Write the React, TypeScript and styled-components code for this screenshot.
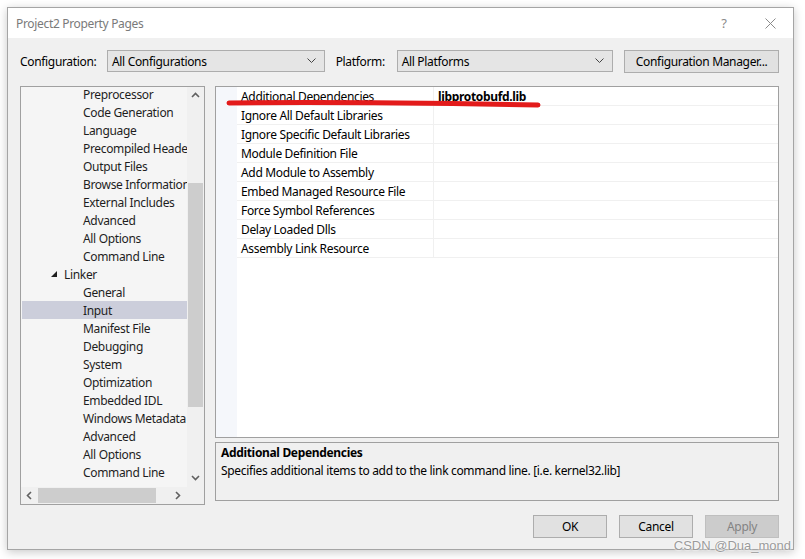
import React from 'react'
import styled, { createGlobalStyle } from 'styled-components'

const GlobalStyle = createGlobalStyle`
    html, body {
        margin: 0;
        padding: 0;
        background: #ffffff;
    }
    body {
        font-family: 'Noto Sans', 'Liberation Sans', sans-serif;
        font-size: 12px;
        letter-spacing: -0.33px;
        color: #000;
    }
`

const Page = styled.div`
    position: relative;
    width: 805px;
    height: 559px;
    padding: 7px 0 0 7px;
    box-sizing: border-box;
`

const Window = styled.div`
    width: 787px;
    height: 543px;
    box-sizing: border-box;
    border: 1px solid #a5a5a5;
    background: #f0f0f0;
    box-shadow: 0 2px 9px rgba(0, 0, 0, 0.22);
    display: flex;
    flex-direction: column;
`

const TitleBar = styled.div`
    height: 30px;
    background: #ffffff;
    display: flex;
    align-items: center;
    padding-left: 8px;
    color: #7a7a7a;
    font-size: 12px;
`

const TitleText = styled.span`
    flex: 1;
`

const TitleButton = styled.span`
    width: 46px;
    display: flex;
    justify-content: center;
    align-items: center;
    color: #8a8a8a;
    font-size: 13px;
`

const Body = styled.div`
    flex: 1;
    display: flex;
    flex-direction: column;
    padding: 11px 14px 0 12px;
`

const Toolbar = styled.div`
    display: flex;
    align-items: center;
    height: 24px;
`

const Label = styled.span<{ $width: number }>`
    width: ${(p) => p.$width}px;
    flex-shrink: 0;
`

const Combo = styled.div<{ $width: number; $gap: number }>`
    width: ${(p) => p.$width}px;
    height: 22px;
    box-sizing: border-box;
    border: 1px solid #adadad;
    background: #e5e5e5;
    display: flex;
    align-items: center;
    padding: 0 8px 0 4px;
    margin-right: ${(p) => p.$gap}px;
`

const ComboText = styled.span`
    flex: 1;
`

const Button = styled.div<{ $width: number; $disabled?: boolean }>`
    width: ${(p) => p.$width}px;
    height: 23px;
    box-sizing: border-box;
    border: 1px solid ${(p) => (p.$disabled ? '#bfbfbf' : '#adadad')};
    background: ${(p) => (p.$disabled ? '#cccccc' : '#e1e1e1')};
    color: ${(p) => (p.$disabled ? '#838383' : '#000')};
    display: flex;
    align-items: center;
    justify-content: center;
`

const Main = styled.div`
    display: flex;
    margin-top: 13px;
    gap: 10px;
`

const TreePanel = styled.div`
    width: 185px;
    height: 419px;
    box-sizing: border-box;
    border: 1px solid #a0a0a0;
    background: #f5f5f5;
    display: grid;
    grid-template-columns: 1fr 17px;
    grid-template-rows: 1fr 17px;
`

const TreeList = styled.div`
    overflow: hidden;
    padding-left: 1px;
`

const TreeScroller = styled.div`
    margin-top: -2px;
`

const TreeRow = styled.div<{ $level: number; $selected?: boolean }>`
    height: 18px;
    display: flex;
    align-items: center;
    padding-left: ${(p) => (p.$level === 1 ? 42 : 61)}px;
    white-space: nowrap;
    background: ${(p) => (p.$selected ? '#cccedb' : 'transparent')};
    color: #1e1e1e;
`

const Expander = styled.span`
    width: 13px;
    margin-left: -13px;
    display: inline-flex;
    align-items: center;
`

const VScroll = styled.div`
    background: #f0f0f0;
    display: flex;
    flex-direction: column;
    align-items: center;
`

const ScrollArrow = styled.div`
    height: 17px;
    width: 17px;
    display: flex;
    align-items: center;
    justify-content: center;
`

const VTrack = styled.div`
    flex: 1;
    width: 100%;
    display: flex;
    flex-direction: column;
    padding-top: 79px;
    box-sizing: border-box;
    align-items: center;
`

const VThumb = styled.div`
    width: 15px;
    height: 224px;
    background: #cdcdcd;
`

const HScroll = styled.div`
    background: #f0f0f0;
    display: flex;
    align-items: center;
`

const HThumb = styled.div`
    width: 118px;
    height: 15px;
    background: #cdcdcd;
    margin-right: auto;
`

const Corner = styled.div`
    background: #f0f0f0;
`

const RightCol = styled.div`
    display: flex;
    flex-direction: column;
    gap: 4px;
`

const Grid = styled.div`
    position: relative;
    width: 564px;
    height: 352px;
    box-sizing: border-box;
    border: 1px solid #a0a0a0;
    background: #ffffff;
    display: flex;
`

const GridGutter = styled.div`
    width: 21px;
    background: #f5f7fb;
`

const GridRows = styled.div`
    flex: 1;
    display: flex;
    flex-direction: column;
`

const PropRow = styled.div`
    height: 19px;
    display: grid;
    grid-template-columns: 197px 1fr;
    border-bottom: 1px solid #f0f0f0;
    box-sizing: border-box;
`

const PropName = styled.div`
    padding-left: 4px;
    display: flex;
    align-items: center;
    border-right: 1px solid #f0f0f0;
`

const PropValue = styled.div`
    padding-left: 4px;
    display: flex;
    align-items: center;
    font-weight: 700;
`

const Mark = styled.svg`
    position: absolute;
    left: 10px;
    top: 11px;
`

const Description = styled.div`
    width: 564px;
    height: 59px;
    box-sizing: border-box;
    border: 1px solid #a0a0a0;
    padding: 1px 5px;
    display: flex;
    flex-direction: column;
    gap: 1px;
`

const DescTitle = styled.div`
    font-weight: 700;
`

const Footer = styled.div`
    display: flex;
    justify-content: flex-end;
    gap: 12px;
    margin-top: 10px;
`

const Watermark = styled.div`
    position: absolute;
    right: 14px;
    bottom: 6px;
    font-family: 'Liberation Sans', Arial, sans-serif;
    font-size: 13px;
    letter-spacing: 0;
    color: #9a9a9a;
    text-shadow: 0 0 2px #fff, 0 0 2px #fff;
`

const Chevron = ({ dir }: { dir: 'up' | 'down' | 'left' | 'right' }) => {
    const pts = {
        down: '1,2 4.5,5.5 8,2',
        up: '1,6 4.5,2.5 8,6',
        left: '6,1 2.5,4.5 6,8',
        right: '2,1 5.5,4.5 2,8',
    }[dir]
    return (
        <svg width="9" height="9" viewBox="0 0 9 9">
            <polyline points={pts} fill="none" stroke="#606060" strokeWidth="1.6" />
        </svg>
    )
}

const ComboArrow = () => (
    <svg width="9" height="6" viewBox="0 0 9 6">
        <polyline points="0.5,0.5 4.5,4.5 8.5,0.5" fill="none" stroke="#444" strokeWidth="1" />
    </svg>
)

const treeItems: { label: string; level: number; selected?: boolean }[] = [
    { label: 'Preprocessor', level: 2 },
    { label: 'Code Generation', level: 2 },
    { label: 'Language', level: 2 },
    { label: 'Precompiled Headers', level: 2 },
    { label: 'Output Files', level: 2 },
    { label: 'Browse Information', level: 2 },
    { label: 'External Includes', level: 2 },
    { label: 'Advanced', level: 2 },
    { label: 'All Options', level: 2 },
    { label: 'Command Line', level: 2 },
    { label: 'Linker', level: 1 },
    { label: 'General', level: 2 },
    { label: 'Input', level: 2, selected: true },
    { label: 'Manifest File', level: 2 },
    { label: 'Debugging', level: 2 },
    { label: 'System', level: 2 },
    { label: 'Optimization', level: 2 },
    { label: 'Embedded IDL', level: 2 },
    { label: 'Windows Metadata', level: 2 },
    { label: 'Advanced', level: 2 },
    { label: 'All Options', level: 2 },
    { label: 'Command Line', level: 2 },
]

const properties: { name: string; value?: string }[] = [
    { name: 'Additional Dependencies', value: 'libprotobufd.lib' },
    { name: 'Ignore All Default Libraries' },
    { name: 'Ignore Specific Default Libraries' },
    { name: 'Module Definition File' },
    { name: 'Add Module to Assembly' },
    { name: 'Embed Managed Resource File' },
    { name: 'Force Symbol References' },
    { name: 'Delay Loaded Dlls' },
    { name: 'Assembly Link Resource' },
]

export default function App() {
    return (
        <Page>
            <GlobalStyle />
            <Window>
                <TitleBar>
                    <TitleText>Project2 Property Pages</TitleText>
                    <TitleButton>?</TitleButton>
                    <TitleButton>
                        <svg width="11" height="11" viewBox="0 0 11 11">
                            <path d="M0.5 0.5 L10.5 10.5 M10.5 0.5 L0.5 10.5" stroke="#8a8a8a" strokeWidth="1" />
                        </svg>
                    </TitleButton>
                </TitleBar>
                <Body>
                    <Toolbar>
                        <Label $width={87}>Configuration:</Label>
                        <Combo $width={218} $gap={11}>
                            <ComboText>All Configurations</ComboText>
                            <ComboArrow />
                        </Combo>
                        <Label $width={61}>Platform:</Label>
                        <Combo $width={217} $gap={11}>
                            <ComboText>All Platforms</ComboText>
                            <ComboArrow />
                        </Combo>
                        <Button $width={155}>Configuration Manager...</Button>
                    </Toolbar>
                    <Main>
                        <TreePanel>
                            <TreeList>
                                <TreeScroller>
                                    {treeItems.map((item, i) => (
                                        <TreeRow key={i} $level={item.level} $selected={item.selected}>
                                            {item.level === 1 && (
                                                <Expander>
                                                    <svg width="7" height="7" viewBox="0 0 7 7">
                                                        <polygon points="6,0 6,6 0,6" fill="#1e1e1e" />
                                                    </svg>
                                                </Expander>
                                            )}
                                            {item.label}
                                        </TreeRow>
                                    ))}
                                </TreeScroller>
                            </TreeList>
                            <VScroll>
                                <ScrollArrow>
                                    <Chevron dir="up" />
                                </ScrollArrow>
                                <VTrack>
                                    <VThumb />
                                </VTrack>
                                <ScrollArrow>
                                    <Chevron dir="down" />
                                </ScrollArrow>
                            </VScroll>
                            <HScroll>
                                <ScrollArrow>
                                    <Chevron dir="left" />
                                </ScrollArrow>
                                <HThumb />
                                <ScrollArrow>
                                    <Chevron dir="right" />
                                </ScrollArrow>
                            </HScroll>
                            <Corner />
                        </TreePanel>
                        <RightCol>
                            <Grid>
                                <GridGutter />
                                <GridRows>
                                    {properties.map((p) => (
                                        <PropRow key={p.name}>
                                            <PropName>{p.name}</PropName>
                                            <PropValue>{p.value}</PropValue>
                                        </PropRow>
                                    ))}
                                </GridRows>
                                <Mark width="320" height="12" viewBox="0 0 320 12">
                                    <path
                                        d="M3 5 C 80 4, 200 5, 312 7"
                                        stroke="#e31b1b"
                                        strokeWidth="5"
                                        strokeLinecap="round"
                                        fill="none"
                                    />
                                </Mark>
                            </Grid>
                            <Description>
                                <DescTitle>Additional Dependencies</DescTitle>
                                <div>Specifies additional items to add to the link command line. [i.e. kernel32.lib]</div>
                            </Description>
                        </RightCol>
                    </Main>
                    <Footer>
                        <Button $width={74}>OK</Button>
                        <Button $width={74}>Cancel</Button>
                        <Button $width={74} $disabled>
                            Apply
                        </Button>
                    </Footer>
                </Body>
            </Window>
            <Watermark>CSDN @Dua_mond</Watermark>
        </Page>
    )
}
